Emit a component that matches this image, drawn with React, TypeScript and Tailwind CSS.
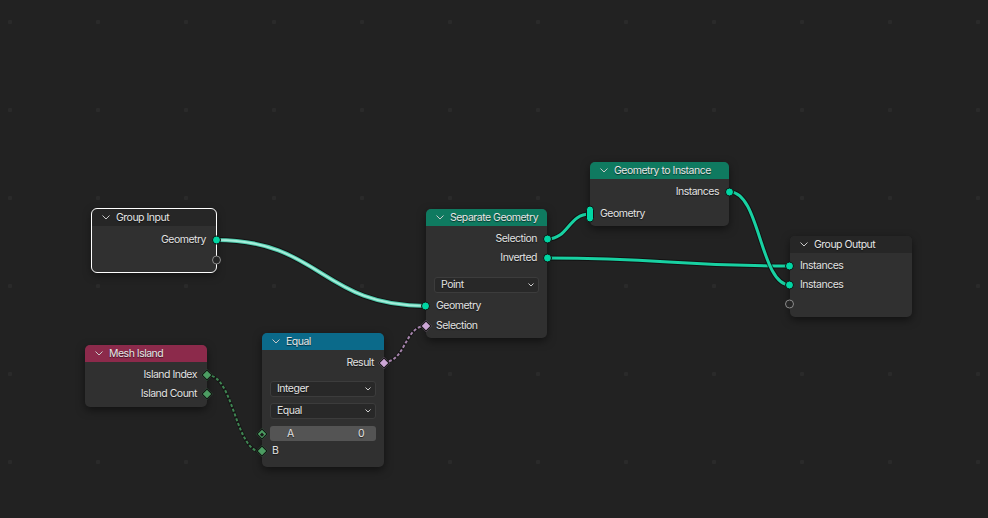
import type { ReactNode } from 'react';

type Kind = 'geo' | 'empty' | 'int' | 'intField' | 'bool' | 'multi';

function Socket({ kind, side }: { kind: Kind; side: 'in' | 'out' }) {
  const left = side === 'in';
  if (kind === 'geo')
    return (
      <span
        className={`absolute top-1/2 h-[9px] w-[9px] -translate-y-1/2 rounded-full border border-[#111] bg-[#00d6a3] ${left ? '-left-[5px]' : '-right-[5px]'}`}
      />
    );
  if (kind === 'empty')
    return (
      <span
        className={`absolute top-1/2 h-[9px] w-[9px] -translate-y-1/2 rounded-full border border-[#8a8a8a] bg-[#262626] ${left ? '-left-[5px]' : '-right-[5px]'}`}
      />
    );
  if (kind === 'multi')
    return <span className="absolute -left-[4px] top-1/2 h-[17px] w-[8px] -translate-y-1/2 rounded-full border border-[#111] bg-[#00d6a3]" />;
  if (kind === 'intField')
    return (
      <span className="absolute -left-[4px] top-1/2 flex h-[8px] w-[8px] -translate-y-1/2 rotate-45 items-center justify-center border border-[#111] bg-[#4c9d62]">
        <span className="h-[3px] w-[3px] bg-[#1a1a1a]" />
      </span>
    );
  const color = kind === 'bool' ? 'bg-[#cca6d6]' : 'bg-[#4c9d62]';
  return (
    <span
      className={`absolute top-1/2 h-[8px] w-[8px] -translate-y-1/2 rotate-45 border border-[#111] ${color} ${left ? '-left-[4px]' : '-right-[4px]'}`}
    />
  );
}

function Row({ label, side, kind, h = 'h-[19px]' }: { label?: string; side: 'in' | 'out'; kind: Kind; h?: string }) {
  return (
    <div className={`relative flex items-center ${h} ${side === 'out' ? 'justify-end pr-[10px]' : 'pl-[10px]'}`}>
      {label && <span>{label}</span>}
      <Socket kind={kind} side={side} />
    </div>
  );
}

function Chevron() {
  return (
    <svg width="8" height="5" viewBox="0 0 8 5" className="shrink-0">
      <path d="M0.5 0.5 L4 4 L7.5 0.5" fill="none" stroke="#c8c8c8" strokeWidth="1" />
    </svg>
  );
}

function Dropdown({ value, className }: { value: string; className: string }) {
  return (
    <div
      className={`mx-[8px] flex items-center justify-between rounded-[3px] border border-[#3c3c3c] bg-[#282828] pl-[6px] pr-[4px] ${className}`}
    >
      <span>{value}</span>
      <svg width="6" height="4" viewBox="0 0 6 4">
        <path d="M0.5 0.5 L3 3 L5.5 0.5" fill="none" stroke="#cfcfcf" strokeWidth="1" />
      </svg>
    </div>
  );
}

function Node({
  pos,
  header,
  title,
  children,
  selected,
}: {
  pos: string;
  header: string;
  title: string;
  children: ReactNode;
  selected?: boolean;
}) {
  return (
    <div
      className={`absolute rounded-[5px] bg-[#303030] shadow-[0_3px_8px_rgba(0,0,0,0.5)] ${pos} ${selected ? 'outline outline-1 outline-white' : ''}`}
    >
      <div className={`flex h-[17px] items-center gap-[6px] rounded-t-[5px] pl-[10px] ${header}`}>
        <Chevron />
        <span className="text-[#e6e6e6]">{title}</span>
      </div>
      {children}
    </div>
  );
}

function link(x1: number, y1: number, x2: number, y2: number) {
  const h = Math.max(Math.abs(x2 - x1) * 0.5, 22);
  return `M ${x1} ${y1} C ${x1 + h} ${y1}, ${x2 - h} ${y2}, ${x2} ${y2}`;
}

function Links() {
  const geo = [
    link(547, 239, 590, 214),
    link(547, 258, 790, 266),
    link(730, 192, 790, 285),
  ];
  const sel = link(216, 240, 426, 306);
  return (
    <svg className="pointer-events-none absolute inset-0" width="988" height="518">
      {geo.map((d) => (
        <g key={d}>
          <path d={d} fill="none" stroke="#0c0c0c" strokeOpacity="0.7" strokeWidth="5" />
          <path d={d} fill="none" stroke="#18d1a2" strokeWidth="3" />
        </g>
      ))}
      <path d={sel} fill="none" stroke="#0c0c0c" strokeOpacity="0.7" strokeWidth="6" />
      <path d={sel} fill="none" stroke="#4fc9ab" strokeWidth="4" />
      <path d={sel} fill="none" stroke="#a6eedb" strokeWidth="2" />
      <path d={link(207, 375, 262, 452)} fill="none" stroke="#0c0c0c" strokeOpacity="0.5" strokeWidth="3.5" />
      <path d={link(207, 375, 262, 452)} fill="none" stroke="#3f8552" strokeWidth="2" strokeDasharray="3 2" />
      <path d={link(384, 362, 426, 326)} fill="none" stroke="#0c0c0c" strokeOpacity="0.5" strokeWidth="3.5" />
      <path d={link(384, 362, 426, 326)} fill="none" stroke="#a684ad" strokeWidth="2" strokeDasharray="3 2" />
    </svg>
  );
}

export default function App() {
  return (
    <div className="relative h-[518px] w-[988px] overflow-hidden bg-[#222222] bg-[radial-gradient(circle,#2a2a2a_2px,transparent_2.5px)] bg-[size:88px_88px] bg-[position:-34px_-22px] font-[Inter,'Liberation_Sans',sans-serif] text-[10.5px] tracking-[-0.5px] text-[#e2e2e2] [text-shadow:0_1px_1px_rgba(0,0,0,0.6)]">
      <Links />

      <Node pos="left-[92px] top-[209px] w-[124px] h-[63px]" header="bg-[#262626]" title="Group Input" selected>
        <div className="pt-[4px]">
          <Row label="Geometry" side="out" kind="geo" h="h-[20px]" />
          <Row side="out" kind="empty" h="h-[20px]" />
        </div>
      </Node>

      <Node pos="left-[426px] top-[209px] w-[121px]" header="bg-[#0f7a60]" title="Separate Geometry">
        <div className="pb-[3px] pt-[3px]">
          <Row label="Selection" side="out" kind="geo" />
          <Row label="Inverted" side="out" kind="geo" />
          <Dropdown value="Point" className="mb-[3px] mt-[10px] h-[16px]" />
          <Row label="Geometry" side="in" kind="geo" h="h-[20px]" />
          <Row label="Selection" side="in" kind="bool" />
        </div>
      </Node>

      <Node pos="left-[590px] top-[162px] w-[139px]" header="bg-[#0f7a60]" title="Geometry to Instance">
        <div className="pb-[1px] pt-[3px]">
          <Row label="Instances" side="out" kind="geo" />
          <div className="mt-[2px]">
            <Row label="Geometry" side="in" kind="multi" h="h-[22px]" />
          </div>
        </div>
      </Node>

      <Node pos="left-[790px] top-[236px] w-[122px]" header="bg-[#262626]" title="Group Output">
        <div className="pb-[4px] pt-[3px]">
          <Row label="Instances" side="in" kind="geo" />
          <Row label="Instances" side="in" kind="geo" />
          <Row side="in" kind="empty" />
        </div>
      </Node>

      <Node pos="left-[85px] top-[345px] w-[122px]" header="bg-[#8c2a4b]" title="Mesh Island">
        <div className="pb-[4px] pt-[3px]">
          <Row label="Island Index" side="out" kind="int" />
          <Row label="Island Count" side="out" kind="int" />
        </div>
      </Node>

      <Node pos="left-[262px] top-[333px] w-[122px]" header="bg-[#0b6a8a]" title="Equal">
        <div className="pb-[6px] pt-[3px]">
          <Row label="Result" side="out" kind="bool" />
          <Dropdown value="Integer" className="mt-[9px] h-[16px]" />
          <Dropdown value="Equal" className="mt-[6px] h-[16px]" />
          <div className="relative mt-[7px] flex h-[15px] items-center">
            <div className="mx-[8px] flex h-[15px] flex-1 items-center justify-between rounded-[3px] bg-[#545454] pl-[17px] pr-[12px]">
              <span>A</span>
              <span>0</span>
            </div>
            <Socket kind="intField" side="in" />
          </div>
          <Row label="B" side="in" kind="int" h="h-[20px]" />
        </div>
      </Node>
    </div>
  );
}
